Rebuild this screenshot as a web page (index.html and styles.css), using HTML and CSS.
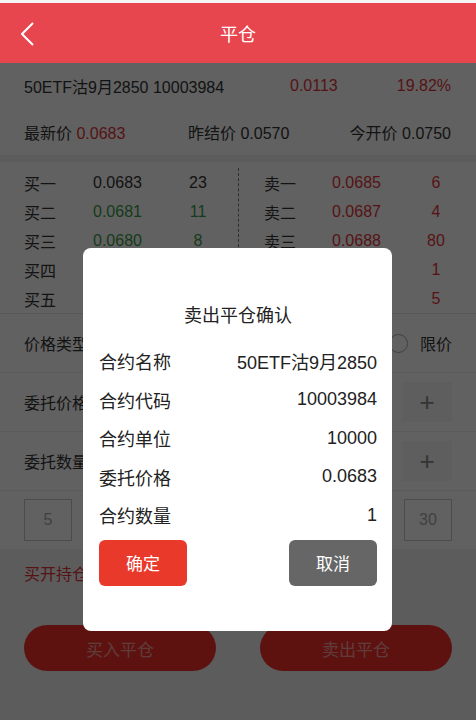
FILE: index.html
```html
<!DOCTYPE html>
<html lang="zh-CN">
<head>
    <meta charset="UTF-8">
    <meta name="viewport" content="width=device-width, initial-scale=1.0">
    <title>平仓</title>
    <link rel="stylesheet" href="styles.css">
</head>
<body>
    <div class="status-strip"></div>
    <header class="top-bar">
        <a class="back" href="#">
            <svg width="14" height="24" viewBox="0 0 14 24"><polyline points="12,1 1,12 12,23" fill="none" stroke="#fff" stroke-width="2"/></svg>
        </a>
        <h1>平仓</h1>
    </header>

    <div class="page">
        <!-- contract info -->
        <section class="info">
            <div class="info-row row-one">
                <span>50ETF沽9月2850 10003984</span>
                <span class="red">0.0113</span>
                <span class="red">19.82%</span>
            </div>
            <div class="info-row row-two">
                <span>最新价 <em class="red">0.0683</em></span>
                <span>昨结价 0.0570</span>
                <span>今开价 0.0750</span>
            </div>
        </section>

        <!-- order book -->
        <section class="book">
            <div class="book-side buy">
                <div class="book-row"><span>买一</span><span>0.0683</span><span class="qty">23</span></div>
                <div class="book-row"><span>买二</span><span class="green">0.0681</span><span class="qty green">11</span></div>
                <div class="book-row"><span>买三</span><span class="green">0.0680</span><span class="qty green">8</span></div>
                <div class="book-row"><span>买四</span><span></span><span class="qty"></span></div>
                <div class="book-row"><span>买五</span><span></span><span class="qty"></span></div>
            </div>
            <div class="book-side sell">
                <div class="book-row"><span>卖一</span><span class="red">0.0685</span><span class="qty red">6</span></div>
                <div class="book-row"><span>卖二</span><span class="red">0.0687</span><span class="qty red">4</span></div>
                <div class="book-row"><span>卖三</span><span class="red">0.0688</span><span class="qty red">80</span></div>
                <div class="book-row"><span></span><span></span><span class="qty red">1</span></div>
                <div class="book-row"><span></span><span></span><span class="qty red">5</span></div>
            </div>
        </section>

        <!-- order form -->
        <section class="form">
            <div class="form-row">
                <span class="label">价格类型</span>
                <div class="radios">
                    <span class="radio"></span><span>限价</span>
                </div>
            </div>
            <div class="form-row">
                <span class="label">委托价格</span>
                <div class="stepper"><span class="step">+</span></div>
            </div>
            <div class="form-row">
                <span class="label">委托数量</span>
                <div class="stepper"><span class="step">+</span></div>
            </div>
            <div class="quick-row">
                <span class="quick">5</span>
                <span class="quick">30</span>
            </div>
        </section>

        <p class="hold red">买开持仓</p>

        <div class="actions">
            <button class="big-btn">买入平仓</button>
            <button class="big-btn">卖出平仓</button>
        </div>
    </div>

    <div class="mask"></div>

    <div class="dialog">
        <h2>卖出平仓确认</h2>
        <div class="dialog-row"><span>合约名称</span><span>50ETF沽9月2850</span></div>
        <div class="dialog-row"><span>合约代码</span><span>10003984</span></div>
        <div class="dialog-row"><span>合约单位</span><span>10000</span></div>
        <div class="dialog-row"><span>委托价格</span><span>0.0683</span></div>
        <div class="dialog-row"><span>合约数量</span><span>1</span></div>
        <div class="dialog-btns">
            <button class="btn-ok">确定</button>
            <button class="btn-cancel">取消</button>
        </div>
    </div>
</body>
</html>
```

FILE: styles.css
```css
/* page */
body {
    margin: 0;
    width: 476px;
    height: 720px;
    overflow: hidden;
    position: relative;
    background-color: #f2f2f2;
    color: #333;
    font-family: "Liberation Sans", "Noto Sans CJK SC", sans-serif;
    font-size: 16px;
}
.status-strip {
    height: 3px;
    background-color: #f4f4f4;
}
.top-bar {
    height: 60px;
    background-color: #e8464f;
    display: flex;
    align-items: center;
    justify-content: center;
    position: relative;
    z-index: 3;
}
.top-bar h1 {
    margin: 0;
    font-size: 18px;
    font-weight: normal;
    color: #fff;
}
.back {
    position: absolute;
    left: 21px;
    top: 19px;
}
.red { color: #e2343c; }
.green { color: #3c9c48; }
em { font-style: normal; }

/* contract info */
.info {
    background-color: #fff;
}
.info-row {
    height: 46px;
    display: grid;
    align-items: center;
    padding: 0 25px 0 24px;
}
.row-one { grid-template-columns: 266px 1fr auto; }
.row-two { grid-template-columns: 164px 1fr auto; }

/* order book */
.book {
    margin-top: 7px;
    background-color: #fff;
    padding-top: 6px;
    display: flex;
    border-bottom: 1px solid #e4e4e4;
}
.book-side {
    width: 238px;
    box-sizing: border-box;
}
.buy { padding-left: 24px; }
.sell {
    padding-left: 25px;
    border-left: 1px dashed #777;
}
.book-row {
    height: 29px;
    display: grid;
    grid-template-columns: 69px 80px 50px;
    align-items: center;
}
.sell .book-row { grid-template-columns: 68px 80px 48px; }
.qty { text-align: center; }

/* form */
.form {
    background-color: #fff;
}
.form-row {
    height: 58px;
    border-bottom: 1px solid #f0f0f0;
    display: flex;
    align-items: center;
    justify-content: space-between;
    padding: 0 24px;
}
.radios {
    display: flex;
    align-items: center;
    gap: 12px;
}
.radio {
    width: 17px;
    height: 17px;
    border: 1px solid #aaa;
    border-radius: 50%;
}
.stepper {
    display: flex;
    align-items: center;
}
.step {
    width: 50px;
    height: 40px;
    background-color: #f6f6f6;
    color: #888;
    font-size: 26px;
    display: flex;
    align-items: center;
    justify-content: center;
}
.quick-row {
    height: 58px;
    display: flex;
    align-items: center;
    justify-content: space-between;
    padding: 0 24px;
}
.quick {
    width: 46px;
    height: 40px;
    border: 1px solid #c8c8c8;
    color: #aaa;
    display: flex;
    align-items: center;
    justify-content: center;
}
.hold {
    margin: 0;
    padding: 12px 24px 0;
    height: 24px;
}
.actions {
    margin-top: 40px;
    display: flex;
    justify-content: space-between;
    padding: 0 24px;
}
.big-btn {
    width: 192px;
    height: 46px;
    border: none;
    border-radius: 23px;
    background-color: #f3302a;
    color: rgba(255, 255, 255, 0.55);
    font-family: inherit;
    font-size: 17px;
}

/* mask + dialog */
.mask {
    position: absolute;
    left: 0;
    top: 63px;
    right: 0;
    bottom: 0;
    background-color: rgba(0, 0, 0, 0.62);
    z-index: 2;
}
.dialog {
    position: absolute;
    left: 83px;
    top: 248px;
    width: 309px;
    height: 383px;
    box-sizing: border-box;
    padding: 55px 15px 0 16px;
    background-color: #fff;
    border-radius: 8px;
    z-index: 4;
    color: #222;
    font-size: 18px;
}
.dialog h2 {
    margin: 0 0 13px;
    font-size: 18px;
    font-weight: normal;
    line-height: 26px;
    text-align: center;
}
.dialog-row {
    height: 38.5px;
    display: flex;
    align-items: center;
    justify-content: space-between;
}
.dialog-btns {
    margin-top: 5px;
    display: flex;
    justify-content: space-between;
}
.dialog-btns button {
    width: 88px;
    height: 46px;
    border: none;
    border-radius: 6px;
    color: #fff;
    font-family: inherit;
    font-size: 17px;
}
.btn-ok { background-color: #e8392b; }
.btn-cancel { background-color: #666; }
```
